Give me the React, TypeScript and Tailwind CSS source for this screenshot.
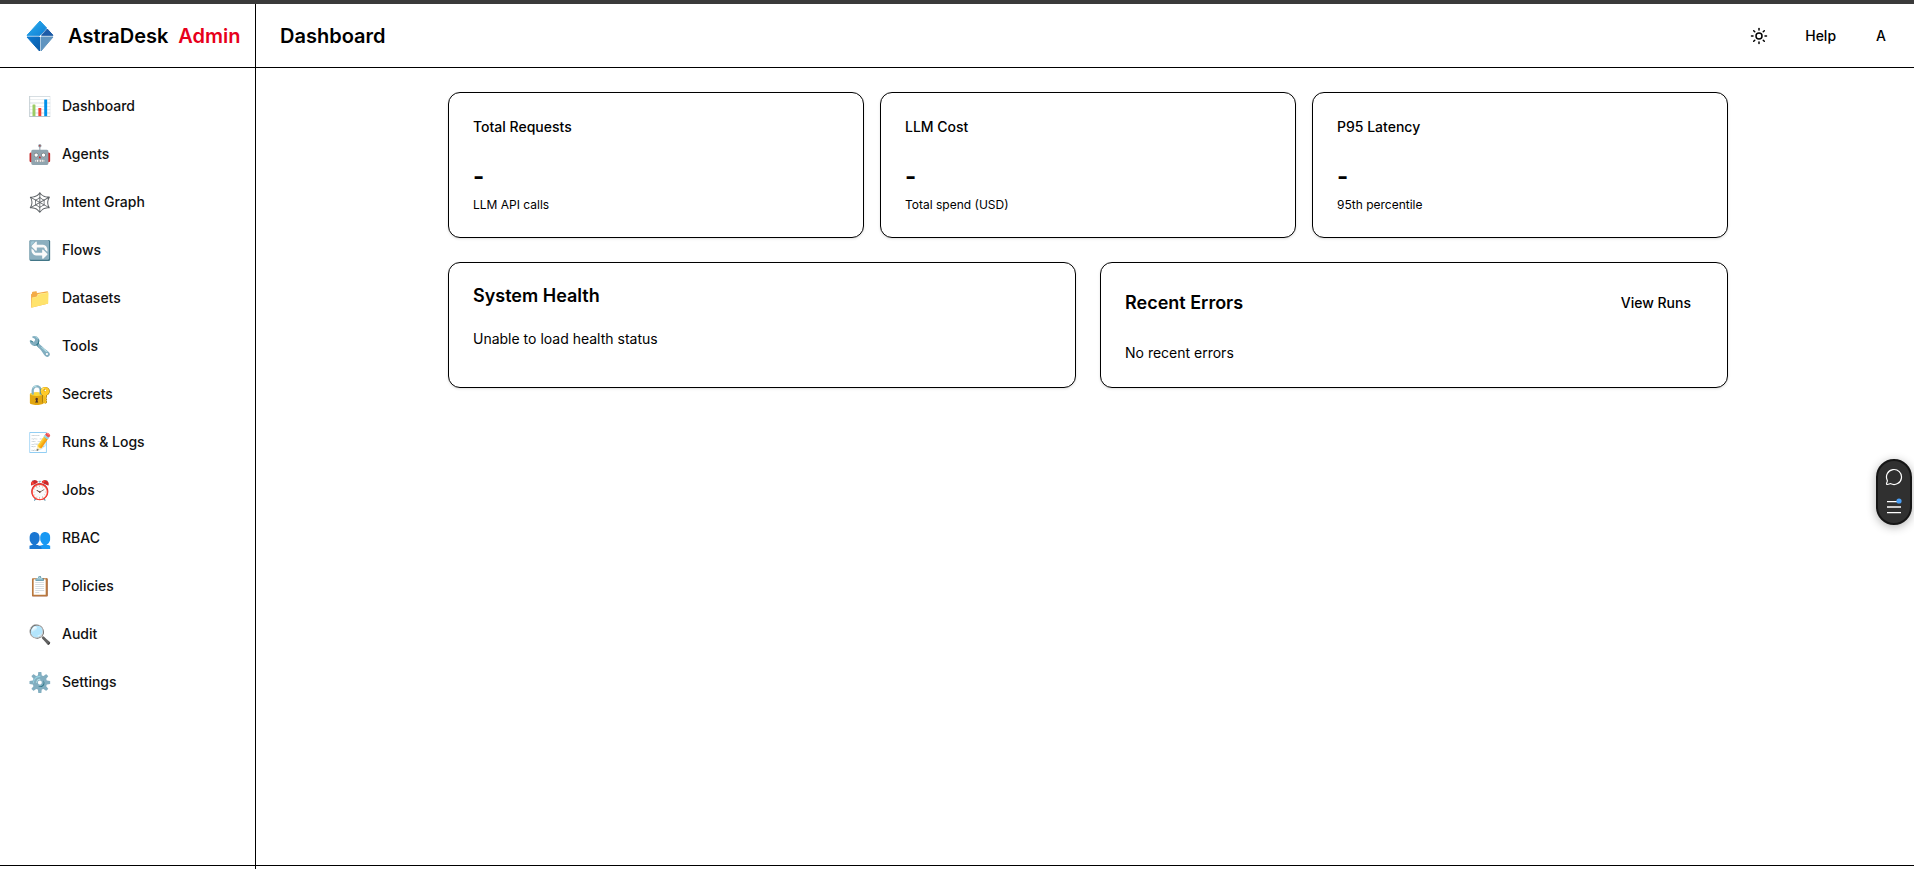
import { MessageCircle, Sun } from "lucide-react";

const NAV: [string, string][] = [
  ["📊", "Dashboard"],
  ["🤖", "Agents"],
  ["🕸️", "Intent Graph"],
  ["🔄", "Flows"],
  ["📁", "Datasets"],
  ["🔧", "Tools"],
  ["🔐", "Secrets"],
  ["📝", "Runs & Logs"],
  ["⏰", "Jobs"],
  ["👥", "RBAC"],
  ["📋", "Policies"],
  ["🔍", "Audit"],
  ["⚙️", "Settings"],
];

const STATS: [string, string][] = [
  ["Total Requests", "LLM API calls"],
  ["LLM Cost", "Total spend (USD)"],
  ["P95 Latency", "95th percentile"],
];

function Logo() {
  return (
    <svg width="28" height="32" viewBox="0 0 28 32" className="shrink-0">
      <defs>
        <linearGradient id="lg1" x1="0" y1="0" x2="1" y2="1">
          <stop offset="0" stopColor="#2bb0f0" />
          <stop offset="1" stopColor="#0f7ed4" />
        </linearGradient>
        <linearGradient id="lg2" x1="0" y1="0" x2="1" y2="1">
          <stop offset="0" stopColor="#0b7ad2" />
          <stop offset="1" stopColor="#0b5aa6" />
        </linearGradient>
      </defs>
      <g strokeLinejoin="round" strokeWidth="1">
        <path d="M1 15.3 L14 1 L20.6 8 L14 15.3 Z" fill="url(#lg1)" stroke="url(#lg1)" />
        <path d="M21.3 9 L27 15.3 L15.5 15.3 Z" fill="#1c5aa6" stroke="#1c5aa6" />
        <path d="M15 17 L27 17 L15 31 Z" fill="#5f94c0" stroke="#5f94c0" />
        <path d="M1 17 L13.5 17 L13.5 31 Z" fill="url(#lg2)" stroke="url(#lg2)" />
      </g>
    </svg>
  );
}

function Card({ children }: { children: React.ReactNode }) {
  return <div className="rounded-xl border border-black bg-white p-6 shadow-sm">{children}</div>;
}

export default function App() {
  return (
    <div className="relative flex h-[869px] w-full flex-col overflow-hidden border-t-4 border-[#3a3a3a] bg-white font-['Inter',sans-serif] text-black">
      <header className="flex h-16 shrink-0 border-b border-black">
        <div className="flex w-[256px] shrink-0 items-center border-r border-black pl-[26px]">
          <Logo />
          <span className="ml-[14px] text-[20px] font-semibold">AstraDesk</span>
          <span className="ml-[10px] text-[20px] font-semibold text-[#e7001b]">Admin</span>
        </div>
        <div className="flex flex-1 items-center pl-6 pr-[28px]">
          <h1 className="text-[20px] font-semibold">Dashboard</h1>
          <div className="ml-auto flex items-center text-sm font-medium">
            <Sun size={18} strokeWidth={2} />
            <span className="ml-[37px]">Help</span>
            <span className="ml-[40px]">A</span>
          </div>
        </div>
      </header>
      <div className="flex min-h-0 flex-1">
        <aside className="w-[256px] shrink-0 border-r border-black pt-[14px]">
          {NAV.map(([icon, label]) => (
            <div key={label} className="flex h-12 items-center pl-[28px] text-sm font-medium text-[#111]">
              <span className="w-[34px] shrink-0 text-[19px] leading-none font-['Noto_Color_Emoji',sans-serif]">{icon}</span>
              <span>{label}</span>
            </div>
          ))}
        </aside>
        <main className="flex-1 pl-[192px] pt-6">
          <div className="w-[1280px]">
            <div className="grid grid-cols-3 gap-4">
              {STATS.map(([title, sub]) => (
                <Card key={title}>
                  <div className="text-sm font-medium">{title}</div>
                  <div className="mt-[24px] text-2xl font-bold leading-8">-</div>
                  <div className="mt-[4px] text-xs">{sub}</div>
                </Card>
              ))}
            </div>
            <div className="mt-6 grid grid-cols-2 gap-6">
              <Card>
                <h2 className="text-lg font-semibold leading-[18px]">System Health</h2>
                <p className="mt-6 text-sm">Unable to load health status</p>
              </Card>
              <Card>
                <div className="flex h-8 items-center justify-between">
                  <h2 className="text-lg font-semibold">Recent Errors</h2>
                  <button className="px-3 text-sm font-medium">View Runs</button>
                </div>
                <p className="mt-6 text-sm">No recent errors</p>
              </Card>
            </div>
          </div>
        </main>
      </div>
      <footer className="h-[4px] shrink-0 border-t border-black">
        <div className="h-full w-[256px] border-r border-black" />
      </footer>
      <div className="absolute left-[1876px] top-[455px] flex h-[66px] w-[36px] flex-col items-center rounded-full border-2 border-[#161616] bg-[#303030] pt-[7px] text-white shadow-[0_2px_10px_rgba(0,0,0,0.3)]">
        <MessageCircle size={18} strokeWidth={1.6} />
        <svg width="18" height="18" viewBox="0 0 18 18" className="mt-[12px]" fill="none">
          <path d="M2 3.7h10M2 9h14M2 14.7h14" stroke="#fff" strokeWidth="1.3" />
          <circle cx="14" cy="3" r="2.6" fill="#4a9ff5" />
        </svg>
      </div>
    </div>
  );
}
